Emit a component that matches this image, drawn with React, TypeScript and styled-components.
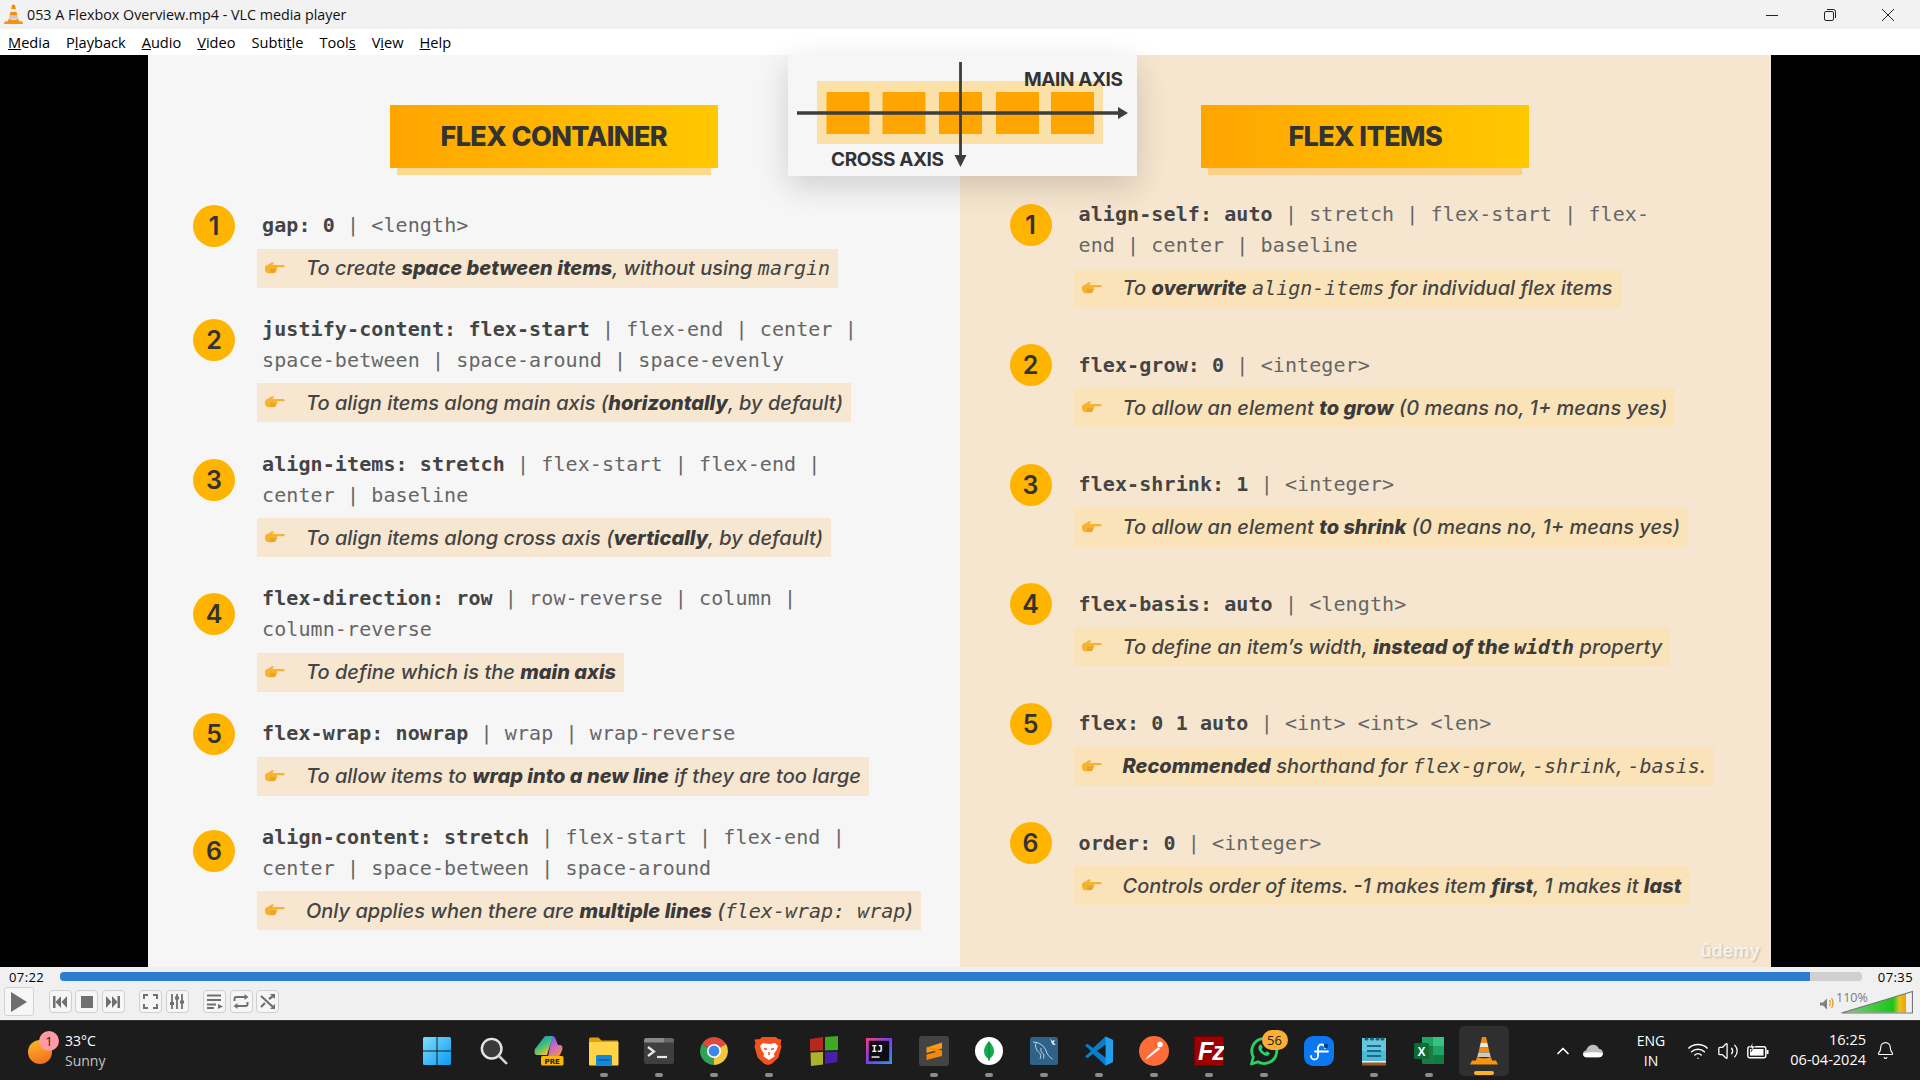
import React from 'react';
import styled, {createGlobalStyle} from 'styled-components';
import {Bell, ChevronUp, Volume2, Wifi} from 'lucide-react';

const Global = createGlobalStyle`
  html, body {
    margin: 0;
    padding: 0;
    width: 1920px;
    height: 1080px;
    overflow: hidden;
    font-family: 'Open Sans', 'Noto Sans', sans-serif;
  }
  * {
    box-sizing: border-box;
  }
`;

const Mono = styled.span`
  font-family: 'DejaVu Sans Mono', monospace;
  font-size: 20px;
`;

const VlcCone: React.FC<{size?: number}> = ({size = 30}) => (
  <svg width={size} height={size} viewBox="0 0 30 30">
    <path d="M13 1h4l1.4 6h-6.8z" fill="#f58a0a" />
    <path d="M11.6 7h6.8l1 4.5h-8.8z" fill="#e9e9e9" />
    <path d="M10.6 11.5h8.8l1.2 5H9.4z" fill="#f78c0c" />
    <path d="M9.4 16.5h11.2l1.2 4.5H8.2z" fill="#c9c9c9" />
    <path d="M8.2 21c3 1.8 10.600 1.800 13.600 0l1.400 3.500H27l2 4H1l2-4h3.800z" fill="#f7930e" />
  </svg>
);

const Hand: React.FC = () => (
  <HandSvg viewBox="0 0 21 15">
    <path
      d="M1 6.500c0-1.500 1.500-2.500 3-2.800l3.500-2.200c1-.6 2.300-.4 2.300.6 0 .6-.5 1-1 1.300l-.8.700H19c1 0 1.700.5 1.700 1.100s-.7 1.100-1.700 1.100h-6.500c.6.300.9.800.8 1.400-.1.500-.4.800-.8 1 .3.400.3 1-.1 1.400-.2.300-.5.400-.8.500.1.400 0 .9-.4 1.200-.4.300-.9.400-1.500.4H5.500C3 12.900 1 11 1 8.500z"
      fill="#f5b332"
    />
    <path d="M6 8.800h5.800M6.200 10.800h5.200" stroke="#d98f1d" strokeWidth=".8" fill="none" />
  </HandSvg>
);

type ItemData = {
  lines: React.ReactNode[];
  note: React.ReactNode;
  lift?: number;
};

const leftItems: ItemData[] = [
  {
    lines: [<><b>gap: 0</b> | &lt;length&gt;</>],
    note: <>To create <strong>space between items</strong>, without using <Mono>margin</Mono></>,
  },
  {
    lines: [
      <><b>justify-content: flex-start</b> | flex-end | center |</>,
      <>space-between | space-around | space-evenly</>,
    ],
    note: <>To align items along main axis (<strong>horizontally</strong>, by default)</>,
    lift: 10,
  },
  {
    lines: [<><b>align-items: stretch</b> | flex-start | flex-end |</>, <>center | baseline</>],
    note: <>To align items along cross axis (<strong>vertically</strong>, by default)</>,
  },
  {
    lines: [<><b>flex-direction: row</b> | row-reverse | column |</>, <>column-reverse</>],
    note: <>To define which is the <strong>main axis</strong></>,
  },
  {
    lines: [<><b>flex-wrap: nowrap</b> | wrap | wrap-reverse</>],
    note: <>To allow items to <strong>wrap into a new line</strong> if they are too large</>,
  },
  {
    lines: [
      <><b>align-content: stretch</b> | flex-start | flex-end |</>,
      <>center | space-between | space-around</>,
    ],
    note: <>Only applies when there are <strong>multiple lines</strong> (<Mono>flex-wrap: wrap</Mono>)</>,
    lift: 4,
  },
];

const rightItems: ItemData[] = [
  {
    lines: [<><b>align-self: auto</b> | stretch | flex-start | flex-</>, <>end | center | baseline</>],
    note: <>To <strong>overwrite</strong> <Mono>align-items</Mono> for individual flex items</>,
    lift: 10,
  },
  {
    lines: [<><b>flex-grow: 0</b> | &lt;integer&gt;</>],
    note: <>To allow an element <strong>to grow</strong> (0 means no, 1+ means yes)</>,
  },
  {
    lines: [<><b>flex-shrink: 1</b> | &lt;integer&gt;</>],
    note: <>To allow an element <strong>to shrink</strong> (0 means no, 1+ means yes)</>,
  },
  {
    lines: [<><b>flex-basis: auto</b> | &lt;length&gt;</>],
    note: <>To define an item’s width, <strong>instead of the <Mono>width</Mono></strong> property</>,
  },
  {
    lines: [<><b>flex: 0 1 auto</b> | &lt;int&gt; &lt;int&gt; &lt;len&gt;</>],
    note: <><strong>Recommended</strong> shorthand for <Mono>flex-grow</Mono>, <Mono>-shrink</Mono>, <Mono>-basis</Mono>.</>,
  },
  {
    lines: [<><b>order: 0</b> | &lt;integer&gt;</>],
    note: <>Controls order of items. -1 makes item <strong>first</strong>, 1 makes it <strong>last</strong></>,
  },
];

const RuleList: React.FC<{items: ItemData[]; top: number; gap: number; warm?: boolean}> = ({items, top, gap, warm}) => (
  <List $top={top} $gap={gap}>
    {items.map((item, i) => (
      <Item key={i}>
        <Badge $lift={item.lift ?? 0}>{i + 1}</Badge>
        <Code>
          {item.lines.map((line, j) => (
            <CodeLine key={j}>{line}</CodeLine>
          ))}
        </Code>
        <Note $warm={warm}>
          <Hand />
          <span>{item.note}</span>
        </Note>
      </Item>
    ))}
  </List>
);

const AxisDiagram: React.FC = () => (
  <Diagram>
    <svg width="349" height="121" viewBox="0 0 349 121">
      <rect x="29" y="26" width="286" height="63" fill="#fbe0a8" />
      {[38.5, 94.5, 151, 208, 263].map(x => (
        <rect key={x} x={x} y="37" width="43" height="42" fill="#ffa500" />
      ))}
      <path d="M9 58h322" stroke="#3d3d3d" strokeWidth="3.500" />
      <path d="M330 52l10 6-10 6z" fill="#3d3d3d" />
      <path d="M172.500 7v96" stroke="#3d3d3d" strokeWidth="2.800" />
      <path d="M166.500 100h12l-6 12z" fill="#3d3d3d" />
      <AxisText x="236" y="31">MAIN AXIS</AxisText>
      <AxisText x="43" y="111">CROSS AXIS</AxisText>
    </svg>
  </Diagram>
);

const StartIcon = () => (
  <StartSvg width="30" height="30" viewBox="0 0 30 30">
    <defs>
      <linearGradient id="win" x1="0" y1="0" x2="1" y2="1">
        <stop offset="0" stopColor="#7edcff" />
        <stop offset="1" stopColor="#0b9bf0" />
      </linearGradient>
    </defs>
    <path d="M1 2.500Q1 1 2.500 1H14.500V14.500H1zM15.500 1H27.500Q29 1 29 2.500V14.500H15.500zM1 15.500H14.500V29H2.500Q1 29 1 27.500zM15.500 15.500H29V27.500Q29 29 27.500 29H15.500z" fill="url(#win)" />
  </StartSvg>
);

const SearchIcon = () => (
  <svg width="28" height="28" viewBox="0 0 30 30">
    <circle cx="12.500" cy="12.500" r="10.500" fill="#3a3a3a" stroke="#e4e4e4" strokeWidth="2.600" />
    <path d="M20.500 20.500L28 28" stroke="#cfcfcf" strokeWidth="3" strokeLinecap="round" />
  </svg>
);

const CopilotIcon = () => (
  <svg width="30" height="30" viewBox="0 0 30 30">
    <defs>
      <linearGradient id="cpa" x1="0" y1="0" x2="0.600" y2="1">
        <stop offset="0" stopColor="#1c7ce0" />
        <stop offset=".55" stopColor="#37c27a" />
        <stop offset="1" stopColor="#f2c230" />
      </linearGradient>
      <linearGradient id="cpb" x1="0" y1="0" x2="0.500" y2="1">
        <stop offset="0" stopColor="#3a6fe8" />
        <stop offset=".5" stopColor="#c065d8" />
        <stop offset="1" stopColor="#f08a60" />
      </linearGradient>
    </defs>
    <path d="M11 0h8L13 19H3C.5 19 0 16 1 13z" fill="url(#cpa)" />
    <path d="M18 0c2 0 3 1 3.500 3L24 9h2c2 0 2.500 2 2.500 4l-2 5c-1 2-2 3-4 3H14z" fill="url(#cpb)" />
    <rect x="7" y="20" width="22.500" height="9.500" rx="1.500" fill="#f7b70f" />
    <PreText x="18.200" y="27.500">PRE</PreText>
  </svg>
);

const FilesIcon = () => (
  <svg width="32" height="30" viewBox="0 0 32 30">
    <path d="M1 3q0-1.500 1.500-1.500h8l3 3H30V12H1z" fill="#e0a106" />
    <path d="M1 6h29.500v22.500q0 1-1 1h-27.500q-1 0-1-1z" fill="#ffd447" />
    <path d="M8 20.500q0-1.500 1.500-1.500h13q1.500 0 1.500 1.500v9H8z" fill="#1487d8" />
    <path d="M10.500 24h11" stroke="#0b5ea8" strokeWidth="1.500" />
  </svg>
);

const TerminalIcon = () => (
  <svg width="30" height="30" viewBox="0 0 30 30">
    <rect y="2" width="30" height="26" rx="2.500" fill="#3f3f3f" />
    <path d="M2.500 2H20v4.500H0V4.500Q0 2 2.500 2z" fill="#8a8a8a" />
    <path d="M20 2h7.500Q30 2 30 4.500v2H20z" fill="#666" />
    <path d="M4 11l6 4.500-6 4.500" stroke="#e8e8e8" strokeWidth="2.200" fill="none" />
    <path d="M13 21h10" stroke="#e8e8e8" strokeWidth="2.200" />
  </svg>
);

const ChromeIcon = () => (
  <svg width="30" height="30" viewBox="0 0 30 30">
    <path d="M15 15L2.900 8A14 14 0 0 1 27.100 8z" fill="#dd4b3e" />
    <path d="M15 15L27.100 8A14 14 0 0 1 15 29z" fill="#f5c63c" />
    <path d="M15 15L15 29A14 14 0 0 1 2.900 8z" fill="#2fa353" />
    <circle cx="15" cy="15" r="7" fill="#fff" />
    <circle cx="15" cy="15" r="5.400" fill="#3d85ed" />
  </svg>
);

const BraveIcon = () => (
  <svg width="30" height="30" viewBox="0 0 30 30">
    <path d="M8 1h14l2 2 3.500 .5-1 4 1 3-3 11-7 6.500-3.500 1-3.500-1-7-6.500-3-11 1-3-1-4L6 3z" fill="#f4511e" />
    <path d="M9 7l6 1 6-1 3 3-1.500 4-2.500 3.500 .5 3L15 24l-5.500-3.500 .5-3L7.500 14 6 10z" fill="#fff" />
    <path d="M10 12.500l3 1M20 12.500l-3 1M15 16v3" stroke="#f4511e" strokeWidth="1.500" />
  </svg>
);

const TilesIcon = () => (
  <svg width="30" height="30" viewBox="0 0 30 30">
    <path d="M1 3l13-2v13.500L1 15z" fill="#b5281c" />
    <path d="M16 1l13-1v14l-13 .5z" fill="#3fa824" />
    <path d="M1.500 16.500L14 16v12.500L2 30z" fill="#aeb32c" />
    <path d="M16 16l12.500-.5V26L16 28z" fill="#4a1fa8" />
  </svg>
);

const IdeaIcon = () => (
  <svg width="26" height="26" viewBox="0 0 28 28">
    <defs>
      <linearGradient id="ij" x1="0" y1="0" x2="1" y2="1">
        <stop offset="0" stopColor="#fc3d7e" />
        <stop offset=".5" stopColor="#7b3df0" />
        <stop offset="1" stopColor="#1fa0f2" />
      </linearGradient>
    </defs>
    <rect width="28" height="28" fill="url(#ij)" />
    <rect x="3" y="3" width="22" height="22" fill="#0c0c12" />
    <IdeaText x="6" y="15">IJ</IdeaText>
    <path d="M6 20.500h8.500" stroke="#fff" strokeWidth="1.500" />
  </svg>
);

const SublimeIcon = () => (
  <svg width="30" height="30" viewBox="0 0 30 30">
    <rect width="30" height="30" rx="3" fill="#434343" />
    <path d="M23 6.500L7.500 11.500V17L23 12.500z" fill="#f99b0e" />
    <path d="M7.500 13.500L23 17.500V23L7.500 27V21.500L17 19z" fill="#f5870a" transform="translate(0 -3)" />
  </svg>
);

const MongoIcon = () => (
  <svg width="30" height="30" viewBox="0 0 30 30">
    <circle cx="15" cy="15" r="14" fill="#fff" />
    <path d="M15 5c3 3.500 5 6.500 5 10 0 4-2.500 6.500-4.300 7.500L15.500 25h-1l-.3-2.500C12 21.500 10 19 10 15c0-3.500 2-6.500 5-10z" fill="#13aa52" />
    <path d="M15 7v17" stroke="#0d6e35" strokeWidth=".8" />
  </svg>
);

const MysqlIcon = () => (
  <svg width="30" height="30" viewBox="0 0 30 30">
    <rect x="1" y="1" width="28" height="28" rx="2.500" fill="#2f6288" />
    <path d="M4 6c6 0 12 4 13.500 10 .6 2.500 3 5 6 7M7 7c-1.500 4 1 8 3.500 10 1.500 1 1.500 4 .5 6M12 12c-.500 3 .5 5 3 6.500l-.5 4" stroke="#cfe0ec" strokeWidth=".9" fill="none" />
    <path d="M21 2l2 3 3-1-1.500 3 2.500 1.500-3 .5-1.500-2.500z" fill="#e8eef2" />
  </svg>
);

const VscodeIcon = () => (
  <svg width="30" height="30" viewBox="0 0 30 30">
    <path d="M21.500.5L29 4v22l-7.500 3.500L9 18l-5.500 4.200L1 20.500 7 15 1 9.500 3.500 7.800 9 12z" fill="#0a7cc8" />
    <path d="M21.500.5L29 4v22l-7.500 3.500z" fill="#21a0ec" />
    <path d="M21.500 8.500L13 15l8.500 6.500z" fill="#1a1a1a" />
  </svg>
);

const PostmanIcon = () => (
  <svg width="30" height="30" viewBox="0 0 30 30">
    <circle cx="15" cy="15" r="15" fill="#fe6c37" />
    <circle cx="21" cy="8.500" r="2.800" fill="#fff" />
    <path d="M19.500 11L9 20l-3 4 4-2.500L21 13z" fill="#fff" />
  </svg>
);

const ZillaIcon = () => (
  <svg width="30" height="30" viewBox="0 0 30 30">
    <rect width="30" height="30" fill="#9c0000" />
    <rect x=".5" y=".5" width="29" height="29" fill="none" stroke="#4a0000" strokeDasharray="1 1" />
    <ZillaText x="4" y="24">Fz</ZillaText>
  </svg>
);

const WhatsappIcon = () => (
  <svg width="30" height="30" viewBox="0 0 30 30">
    <path d="M2.500 28l1.800-7A12.500 12.500 0 1 1 9 25.800z" fill="none" stroke="#25d366" strokeWidth="2.800" strokeLinejoin="round" />
    <path d="M10.500 9c1-.8 1.800-.6 2.200.3l.8 1.800c.2.500 0 1-.3 1.300l-.7.800c.8 1.500 2 2.700 3.700 3.500l.9-.9c.3-.3.800-.4 1.200-.2l1.800.9c.7.400.8 1.200.2 2-1 1.300-2.700 1.600-4.500.9-3.200-1.200-5.400-3.500-6.300-6.400-.4-1.400 0-2.800 1-3.800z" fill="#25d366" />
  </svg>
);

const FlowIcon = () => (
  <svg width="30" height="30" viewBox="0 0 30 30">
    <rect width="30" height="30" rx="9" fill="#0b78f2" />
    <path d="M7 20a3.500 3.500 0 1 0 7 0v-8a3.500 3.500 0 0 1 7 0M11 15.500h13" stroke="#fff" strokeWidth="1.800" fill="none" strokeLinecap="round" />
    <circle cx="22" cy="10" r="2.200" fill="#063f85" />
  </svg>
);

const NotepadIcon = () => (
  <svg width="30" height="30" viewBox="0 0 30 30">
    <rect x="3" y="2" width="24" height="27" fill="#4cb9d6" />
    <rect x="3" y="2" width="24" height="13" fill="#7ed4ea" opacity=".5" />
    <path d="M3 26h24v3.500H3z" fill="#9a5a26" />
    <path d="M3 25h24v1.500H3z" fill="#f0f0f0" />
    <path d="M7 3h1M12.500 3h1M18 3h1M23 3h1" stroke="#1f5f74" strokeWidth="3" strokeLinecap="round" />
    <path d="M8 10h14M8 15h14M8 20h14" stroke="#1d6a85" strokeWidth="2" />
  </svg>
);

const ExcelIcon = () => (
  <svg width="30" height="30" viewBox="0 0 30 30">
    <rect x="8" y="1" width="22" height="27" rx="1.500" fill="#1d7a45" />
    <rect x="19" y="1" width="11" height="9" fill="#33c481" />
    <rect x="8" y="1" width="11" height="9" fill="#21a366" />
    <rect x="19" y="10" width="11" height="9" fill="#21a366" />
    <rect x="19" y="19" width="11" height="9" fill="#107c41" />
    <rect x="0" y="7" width="15" height="16" rx="1.500" fill="#0e6b38" />
    <ExcelText x="7.500" y="19.500">X</ExcelText>
  </svg>
);

const apps: {icon: React.ReactNode; open?: boolean; active?: boolean; count?: number}[] = [
  {icon: <StartIcon />},
  {icon: <SearchIcon />},
  {icon: <CopilotIcon />},
  {icon: <FilesIcon />, open: true},
  {icon: <TerminalIcon />, open: true},
  {icon: <ChromeIcon />, open: true},
  {icon: <BraveIcon />, open: true},
  {icon: <TilesIcon />},
  {icon: <IdeaIcon />},
  {icon: <SublimeIcon />, open: true},
  {icon: <MongoIcon />, open: true},
  {icon: <MysqlIcon />, open: true},
  {icon: <VscodeIcon />, open: true},
  {icon: <PostmanIcon />, open: true},
  {icon: <ZillaIcon />, open: true},
  {icon: <WhatsappIcon />, open: true, count: 56},
  {icon: <FlowIcon />},
  {icon: <NotepadIcon />, open: true},
  {icon: <ExcelIcon />, open: true},
  {icon: <VlcCone />, active: true},
];

const App: React.FC = () => (
  <Page>
    <Global />
    <TitleBar>
      <TitleLeft>
        <VlcCone size={21} />
        <span>053 A Flexbox Overview.mp4 - VLC media player</span>
      </TitleLeft>
      <WindowButtons>
        <svg width="12" height="12" viewBox="0 0 12 12">
          <path d="M0 6.500h12" stroke="#222" />
        </svg>
        <svg width="12" height="12" viewBox="0 0 12 12">
          <rect x=".5" y="2.500" width="9" height="9" rx="1.500" fill="none" stroke="#222" />
          <path d="M3 .5h6.500q2 0 2 2V9" fill="none" stroke="#222" />
        </svg>
        <svg width="12" height="12" viewBox="0 0 12 12">
          <path d="M0 0l12 12M12 0L0 12" stroke="#222" />
        </svg>
      </WindowButtons>
    </TitleBar>

    <MenuBar>
      <span><u>M</u>edia</span>
      <span>P<u>l</u>ayback</span>
      <span><u>A</u>udio</span>
      <span><u>V</u>ideo</span>
      <span>Subti<u>t</u>le</span>
      <span>Tool<u>s</u></span>
      <span>V<u>i</u>ew</span>
      <span><u>H</u>elp</span>
    </MenuBar>

    <Stage>
      <Slide>
        <Column>
          <Heading>FLEX CONTAINER</Heading>
          <RuleList items={leftItems} top={42} gap={26.25} />
        </Column>
        <Column $warm>
          <Heading $warm>FLEX ITEMS</Heading>
          <RuleList items={rightItems} top={31} gap={42} warm />
        </Column>
        <AxisDiagram />
        <Watermark>ûdemy</Watermark>
      </Slide>
    </Stage>

    <ControlBar>
      <ProgressRow>
        <Time>07:22</Time>
        <Track>
          <Fill style={{width: '97.1%'}} />
        </Track>
        <Time>07:35</Time>
      </ProgressRow>
      <ButtonRow>
        <PlayButton>
          <svg width="16" height="20" viewBox="0 0 16 20">
            <path d="M0 0l16 10L0 20z" fill="#6e6e6e" />
          </svg>
        </PlayButton>
        <Group>
          <SmallButton>
            <svg width="14" height="12" viewBox="0 0 14 12">
              <path d="M0 0h2.500v12H0zM8 0v12L2.500 6zM14 0v12L8.500 6z" fill="#707070" />
            </svg>
          </SmallButton>
          <SmallButton>
            <svg width="12" height="12" viewBox="0 0 12 12">
              <rect width="12" height="12" fill="#707070" />
            </svg>
          </SmallButton>
          <SmallButton>
            <svg width="14" height="12" viewBox="0 0 14 12">
              <path d="M14 0h-2.500v12H14zM6 0v12l5.500-6zM0 0v12l5.500-6z" fill="#707070" />
            </svg>
          </SmallButton>
        </Group>
        <Group>
          <SmallButton>
            <svg width="15" height="15" viewBox="0 0 15 15">
              <path d="M1 5V1h4M10 1h4v4M14 10v4h-4M5 14H1v-4" fill="none" stroke="#707070" strokeWidth="2" />
            </svg>
          </SmallButton>
          <SmallButton>
            <svg width="16" height="15" viewBox="0 0 16 15">
              <path d="M3 0v15M8 0v15M13 0v15" stroke="#707070" strokeWidth="1.800" />
              <path d="M1 9.500h4M6 4h4M11 8h4" stroke="#707070" strokeWidth="3" />
            </svg>
          </SmallButton>
        </Group>
        <Group>
          <SmallButton>
            <svg width="16" height="15" viewBox="0 0 16 15">
              <path d="M0 1.500h14M0 6h14M0 10.500h9M0 14h7" stroke="#707070" strokeWidth="1.800" />
              <path d="M11 10l5 2.500-5 2.500z" fill="#707070" />
            </svg>
          </SmallButton>
          <SmallButton>
            <svg width="16" height="15" viewBox="0 0 16 15">
              <path d="M1.500 7V5q0-2 2-2h9M14.500 8v2q0 2-2 2h-9" fill="none" stroke="#707070" strokeWidth="2" />
              <path d="M11.500 0l4 3-4 3zM4.500 9l-4 3 4 3z" fill="#707070" />
            </svg>
          </SmallButton>
          <SmallButton>
            <svg width="16" height="15" viewBox="0 0 16 15">
              <path d="M1 2l12 11M1 13l4-4M9 5l4-3" fill="none" stroke="#707070" strokeWidth="2.200" />
              <path d="M10 0h5v5zM10 15h5v-5z" fill="#707070" />
            </svg>
          </SmallButton>
        </Group>
        <Volume>
          <svg width="93" height="24" viewBox="0 0 93 24">
            <defs>
              <linearGradient id="vol" x1="21" y1="0" x2="86" y2="0" gradientUnits="userSpaceOnUse">
                <stop offset="0" stopColor="#7fd07f" />
                <stop offset=".8" stopColor="#1cc51c" />
                <stop offset=".9" stopColor="#e4c520" />
                <stop offset="1" stopColor="#ff9a00" />
              </linearGradient>
            </defs>
            <path d="M0 12.500h3l4-4v11l-4-4H0z" fill="#808080" />
            <path d="M9.500 10c1 1.500 1 4.500 0 6M11.500 8c2 2.500 2 7.500 0 10" fill="none" stroke="#f28c1c" strokeWidth="1.200" />
            <path d="M22 22.500L86 3.500V22.500z" fill="url(#vol)" />
            <path d="M21.500 23L92.500 1.500V23z" fill="none" stroke="#777" strokeWidth="1.200" />
            <VolumeText x="16" y="12">110%</VolumeText>
          </svg>
        </Volume>
      </ButtonRow>
    </ControlBar>

    <Taskbar>
      <Weather>
        <WeatherIcon>
          <WeatherBadge>1</WeatherBadge>
        </WeatherIcon>
        <div>
          <WeatherTemp>33°C</WeatherTemp>
          <WeatherSky>Sunny</WeatherSky>
        </div>
      </Weather>
      <AppStrip>
        {apps.map((app, i) => (
          <AppCell key={i} $active={app.active}>
            {app.icon}
            {app.open && <OpenDot />}
            {app.active && <ActiveBar />}
            {app.count && <CountBadge>{app.count}</CountBadge>}
          </AppCell>
        ))}
      </AppStrip>
      <Tray>
        <TrayCell>
          <ChevronUp size={20} strokeWidth={2} />
        </TrayCell>
        <TrayCell>
          <svg width="20" height="14" viewBox="0 0 22 15">
            <path d="M5 14.500c-3 0-5-1.500-5-4 0-2 1.500-3.500 3.500-3.500C4.500 3 7.500.5 11 .5c3 0 5.500 1.500 6.500 4.500 2.500.2 4.500 2 4.500 4.800 0 3-2 4.700-4.500 4.700z" fill="#bdbdbd" />
            <path d="M4 9.500c4-1 12-1 18 .5-.3 3-2 4.500-4.500 4.500H5c-3 0-5-1.500-5-4z" fill="#fff" />
          </svg>
        </TrayCell>
        <Lang>
          <div>ENG</div>
          <div>IN</div>
        </Lang>
        <TrayCell>
          <Wifi size={22} strokeWidth={1.600} />
        </TrayCell>
        <TrayCell>
          <Volume2 size={22} strokeWidth={1.400} />
        </TrayCell>
        <TrayCell>
          <svg width="22" height="18" viewBox="0 0 22 18">
            <rect x=".8" y="4.800" width="18" height="11" rx="2" fill="none" stroke="#fff" strokeWidth="1.400" />
            <rect x="3" y="7" width="13.500" height="6.600" fill="#fff" />
            <path d="M19.500 8h2v4h-2z" fill="#fff" />
            <path d="M6 0L2.500 6H5L4 10l4-6H5.500z" fill="#fff" stroke="#1c1c1c" strokeWidth=".6" />
          </svg>
        </TrayCell>
        <Clock>
          <div>16:25</div>
          <div>06-04-2024</div>
        </Clock>
        <BellCell>
          <Bell size={19} strokeWidth={1.400} />
        </BellCell>
      </Tray>
    </Taskbar>
  </Page>
);

export default App;

const Page = styled.div`
  display: flex;
  flex-direction: column;
  width: 1920px;
  height: 1080px;
`;

const TitleBar = styled.div`
  display: flex;
  align-items: center;
  justify-content: space-between;
  height: 29px;
  background: #f2f2f2;
`;

const TitleLeft = styled.div`
  display: flex;
  align-items: center;
  gap: 3px;
  padding-left: 3px;
  font-size: 14.3px;
  color: #111;
`;

const WindowButtons = styled.div`
  display: flex;
  gap: 46px;
  padding-right: 26px;
`;

const MenuBar = styled.div`
  display: flex;
  align-items: center;
  gap: 16px;
  height: 26px;
  padding-left: 8px;
  background: #fff;
  font-size: 14.6px;
  color: #000;
`;

const Stage = styled.div`
  flex: 1;
  min-height: 0;
  padding: 0 149px 0 148px;
  background: #000;
`;

const Slide = styled.div`
  position: relative;
  display: grid;
  grid-template-columns: 1fr 1fr;
  height: 100%;
`;

const Column = styled.div<{$warm?: boolean}>`
  display: flex;
  flex-direction: column;
  padding: 50px 0 0 ${p => (p.$warm ? 50 : 45)}px;
  background: ${p => (p.$warm ? '#f6e6cf' : '#f6f6f6')};
`;

const Heading = styled.div<{$warm?: boolean}>`
  position: relative;
  align-self: center;
  width: 328px;
  height: 63px;
  margin-left: ${p => (p.$warm ? -50 : -45)}px;
  background: linear-gradient(90deg, #ffa500, #ffc800);
  font-family: Inter, sans-serif;
  font-size: 27px;
  font-weight: 800;
  letter-spacing: -0.6px;
  line-height: 63px;
  text-align: center;
  color: #333;

  &::after {
    content: '';
    position: absolute;
    left: 7px;
    right: 7px;
    bottom: -7px;
    height: 7px;
    background: ${p => (p.$warm ? '#fccf87' : '#fdd98b')};
  }
`;

const List = styled.div<{$top: number; $gap: number}>`
  display: flex;
  flex-direction: column;
  gap: ${p => p.$gap}px;
  margin-top: ${p => p.$top}px;
`;

const Item = styled.div`
  display: grid;
  grid-template-columns: 42px 1fr;
  column-gap: 27px;
`;

const Badge = styled.div<{$lift: number}>`
  align-self: center;
  width: 42px;
  height: 42px;
  margin-top: -10px;
  margin-bottom: ${p => p.$lift - 10}px;
  border-radius: 50%;
  background: #ffb400;
  font-family: Inter, sans-serif;
  font-size: 25px;
  font-weight: 600;
  line-height: 42px;
  text-align: center;
  color: #333;
`;

const Code = styled.div`
  font-family: 'DejaVu Sans Mono', monospace;
  font-size: 20px;
  line-height: 31px;
  letter-spacing: 0.1px;
  color: #666;

  b {
    font-weight: 700;
    color: #444;
  }
`;

const CodeLine = styled.div`
  white-space: pre;
`;

const Note = styled.div<{$warm?: boolean}>`
  grid-column: 2;
  justify-self: start;
  display: flex;
  align-items: center;
  gap: 21px;
  height: 39px;
  margin: 7.5px 0 0 -5px;
  padding: 0 8px 0 7px;
  background: ${p => (p.$warm ? '#fbe3b9' : '#f7e7d1')};
  font-family: Inter, sans-serif;
  font-size: 20px;
  font-style: italic;
  font-weight: 500;
  white-space: nowrap;
  color: #444;

  strong {
    font-weight: 800;
    color: #3a3a3a;
  }
`;

const HandSvg = styled.svg`
  flex: none;
  width: 21px;
  height: 15px;
`;

const Diagram = styled.div`
  position: absolute;
  left: 640px;
  top: 0;
  width: 349px;
  height: 121px;
  background: #f6f6f6;
  box-shadow: 0 10px 30px rgba(0, 0, 0, 0.16);
`;

const AxisText = styled.text`
  font-family: Inter, sans-serif;
  font-size: 19px;
  font-weight: 700;
  letter-spacing: -0.4px;
  fill: #333;
`;

const Watermark = styled.div`
  position: absolute;
  right: 11px;
  bottom: 6px;
  font-family: Inter, sans-serif;
  font-size: 18px;
  font-weight: 600;
  color: rgba(255, 255, 255, 0.75);
  text-shadow: 1px 1px 2px rgba(0, 0, 0, 0.2);
`;

const ControlBar = styled.div`
  height: 53px;
  padding-top: 5px;
  background: #f0f0f0;
`;

const ProgressRow = styled.div`
  display: flex;
  align-items: center;
  gap: 16px;
  height: 9px;
  padding: 0 7px 0 9px;
`;

const Time = styled.div`
  flex: none;
  font-size: 13px;
  line-height: 16px;
  letter-spacing: 0.4px;
  color: #000;
`;

const Track = styled.div`
  flex: 1;
  height: 9px;
  border-radius: 4px;
  background: #cfcfcf;
  overflow: hidden;
`;

const Fill = styled.div`
  height: 100%;
  background: #2b7dd2;
`;

const ButtonRow = styled.div`
  display: flex;
  align-items: center;
  gap: 14.5px;
  height: 29px;
  margin-top: 6px;
  padding: 0 7px 0 4px;
`;

const PlayButton = styled.div`
  display: flex;
  align-items: center;
  justify-content: center;
  width: 30px;
  height: 29px;
  border: 1px solid #d2d2d2;
  border-radius: 3px;
  background: #f6f6f6;
`;

const Group = styled.div`
  display: flex;
  gap: 3.5px;
`;

const SmallButton = styled.div`
  display: flex;
  align-items: center;
  justify-content: center;
  width: 23px;
  height: 23px;
  border: 1px solid #cfcfcf;
  border-radius: 4px;
  background: #f6f6f6;
`;

const Volume = styled.div`
  display: flex;
  margin-left: auto;
`;

const VolumeText = styled.text`
  font-family: 'Open Sans', sans-serif;
  font-size: 12.5px;
  fill: #7a7a8a;
`;

const Taskbar = styled.div`
  display: flex;
  align-items: center;
  height: 60px;
  border-top: 1px solid #333;
  background: #1c1c1c;
  color: #fff;
`;

const Weather = styled.div`
  display: flex;
  gap: 13px;
  width: 411.5px;
  padding-left: 28px;
  align-items: center;
`;

const WeatherIcon = styled.div`
  position: relative;
  width: 24px;
  height: 24px;
  margin-top: 2px;
  border-radius: 50%;
  background: linear-gradient(160deg, #fdbb2a, #f2651a);
`;

const WeatherBadge = styled.div`
  position: absolute;
  left: 11px;
  top: -9px;
  width: 20px;
  height: 20px;
  border-radius: 50%;
  background: #ff9aa2;
  font-size: 13px;
  line-height: 20px;
  text-align: center;
  color: #222;
`;

const WeatherTemp = styled.div`
  font-size: 14px;
  line-height: 20px;
`;

const WeatherSky = styled.div`
  font-size: 14px;
  line-height: 20px;
  color: #c4c4c4;
`;

const AppStrip = styled.div`
  display: flex;
  flex: none;
`;

const AppCell = styled.div<{$active?: boolean}>`
  position: relative;
  display: flex;
  align-items: center;
  justify-content: center;
  width: 55px;
  height: 50px;
  ${p => p.$active && 'background: #2f2f2f; border-radius: 5px; width: 50px; margin-left: 2px; margin-right: 3px;'}
`;

const StartSvg = styled.svg`
  margin-right: 4px;
`;

const OpenDot = styled.div`
  position: absolute;
  left: 50%;
  bottom: -1px;
  width: 8px;
  height: 4px;
  margin-left: -4px;
  border-radius: 2px;
  background: #8c8c8c;
`;

const ActiveBar = styled.div`
  position: absolute;
  left: 50%;
  bottom: 1px;
  width: 20px;
  height: 4px;
  margin-left: -10px;
  border-radius: 2px;
  background: #ffb030;
`;

const CountBadge = styled.div`
  position: absolute;
  left: 25px;
  top: 4px;
  width: 26px;
  height: 20px;
  border-radius: 10px;
  background: #fcb033;
  font-size: 13px;
  line-height: 20px;
  text-align: center;
  color: #222;
`;

const Tray = styled.div`
  display: flex;
  align-items: center;
  margin-left: 36.5px;
`;

const TrayCell = styled.div`
  display: flex;
  align-items: center;
  justify-content: center;
  width: 30px;
`;

const Lang = styled.div`
  width: 56px;
  margin: 0 4px 0 15px;
  font-size: 14px;
  line-height: 20px;
  text-align: center;
`;

const Clock = styled.div`
  width: 93px;
  margin-top: -2px;
  font-size: 14.5px;
  line-height: 20px;
  text-align: right;
`;

const BellCell = styled.div`
  display: flex;
  justify-content: center;
  width: 38px;
`;

const PreText = styled.text`
  font-family: 'DejaVu Sans', sans-serif;
  font-size: 7px;
  font-weight: 700;
  text-anchor: middle;
  fill: #2a1c00;
`;

const IdeaText = styled.text`
  font-family: 'DejaVu Sans Mono', monospace;
  font-size: 10px;
  font-weight: 700;
  fill: #fff;
`;

const ZillaText = styled.text`
  font-family: 'Liberation Sans', sans-serif;
  font-size: 25px;
  font-style: italic;
  font-weight: 700;
  letter-spacing: -1px;
  fill: #fff;
`;

const ExcelText = styled.text`
  font-family: 'Liberation Sans', sans-serif;
  font-size: 12px;
  font-weight: 700;
  text-anchor: middle;
  fill: #fff;
`;
